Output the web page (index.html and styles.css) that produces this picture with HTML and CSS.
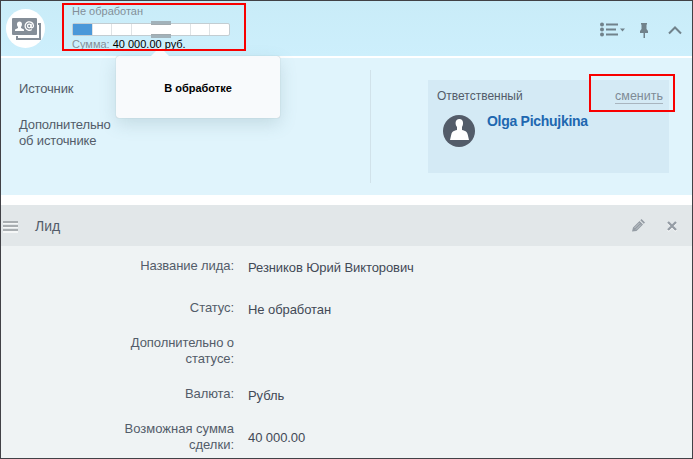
FILE: index.html
```html
<!DOCTYPE html>
<html lang="ru">
<head>
<meta charset="utf-8">
<title>Лид</title>
<link rel="stylesheet" href="styles.css">
</head>
<body>
<div class="app">
  <header class="top">
    <svg class="logo" width="40" height="40" viewBox="0 0 40 40">
      <circle cx="19.500" cy="20.500" r="19.500" fill="#fff"/>
      <path d="M11 16H34V31H11Z" fill="#fff" stroke="#858e98" stroke-width="2"/>
      <rect x="5" y="9" width="27" height="19" rx="1.500" fill="#fff"/>
      <rect x="6" y="10" width="25" height="17" rx="1" fill="#858e98"/>
      <path d="M13.500 13.500c3 0 3 4 1.500 5.500v1l3 1.500v1.500H9v-1.500l3-1.500v-1C10.500 17.500 10.500 13.500 13.500 13.500Z" fill="#fff"/>
      <g fill="none" stroke="#fff" stroke-width="1.300"><circle cx="23.300" cy="18" r="1.800"/><path d="M25.100 16v2.700c0 2 2.400 1 2.400-1a4.200 4.200 0 1 0-1.800 3.800"/></g>
    </svg>
    <div class="progress">
      <div class="state">Не обработан</div>
      <div class="bar"><i class="on"></i><i></i><i></i><i></i><i class="hover"></i><i></i><i></i><i></i></div>
      <div class="sum">Сумма: <b>40 000.00 руб.</b></div>
    </div>
    <div class="tools">
      <svg width="26" height="16" viewBox="0 0 26 16" fill="#71828b"><circle cx="2" cy="2.500" r="2"/><circle cx="2" cy="7.500" r="2"/><circle cx="2" cy="12.500" r="2"/><path d="M6 1.500h12v2H6zM6 6.500h10v2H6zM6 11.500h12v2H6zM20 6.500h5l-2.500 3z"/></svg>
      <svg width="9" height="17" viewBox="0 0 9 17" fill="#71828b"><path d="M1 1h6v1.500H6.500V7l1.500 2v2H5v5H3.500v-5H0V9l1.500-2V2.500H1z"/></svg>
      <svg width="14" height="9" viewBox="0 0 14 9" fill="none" stroke="#71828b" stroke-width="2"><path d="M1 7.500 7 1.500l6 6"/></svg>
    </div>
  </header>

  <section class="summary">
    <div class="source">
      <div class="field">Источник</div>
      <div class="field second">Дополнительно<br>об источнике</div>
    </div>
    <div class="card">
      <div class="card-head"><span class="role">Ответственный</span><a class="change">сменить</a></div>
      <div class="person">
        <svg width="32" height="32" viewBox="0 0 32 32"><circle cx="16" cy="16" r="16" fill="#535c69"/><path d="M16.500 4c4.500 0 4 6 2.500 8v3c3.500 1 5 1.500 5.700 4.500L26 25H7l1.300-5.500C9 16.500 10.500 16 14 15v-3c-2-2-2.500-8 2.500-8Z" fill="#fff"/></svg>
        <a class="name">Olga Pichujkina</a>
      </div>
    </div>
  </section>

  <div class="section-head">
    <svg class="grip" width="15" height="12" viewBox="0 0 15 12"><path fill="#a9aeb1" d="M0 0h15v2H0zM0 4h15v2H0zM0 8h15v2H0z"/><path fill="#f5f7f7" d="M0 2h15v1H0zM0 6h15v1H0zM0 10h15v2H0z"/></svg>
    <h2>Лид</h2>
    <svg class="edit" width="13" height="13" viewBox="0 0 13 13"><path fill="#949ca4" d="M0 12.500 1 8.500 7.500 2l3.500 3.500L4.500 12zM8.300 1.200 9.500 0 13 3.500l-1.200 1.200z"/><path stroke="#cbd0d4" stroke-width=".8" d="m2.500 9 5-5M4 10.500l5-5"/></svg>
    <svg class="close" width="10" height="11" viewBox="0 0 10 11"><path stroke="#fff" stroke-width="2" d="m1 2 8 8M9 2l-8 8"/><path stroke="#949ca4" stroke-width="2.300" d="m1 1 8 8M9 1 1 9"/></svg>
  </div>

  <dl class="form">
    <dt>Название лида:</dt><dd>Резников Юрий Викторович</dd>
    <dt>Статус:</dt><dd>Не обработан</dd>
    <dt>Дополнительно о<br>статусе:</dt><dd></dd>
    <dt>Валюта:</dt><dd>Рубль</dd>
    <dt class="wide">Возможная сумма<br>сделки:</dt><dd>40 000.00</dd>
  </dl>

  <div class="tip">В обработке</div>
  <div class="mark mark-progress"></div>
  <div class="mark mark-change"></div>
</div>
</body>
</html>
```
FILE: styles.css
```css
* { box-sizing: border-box; }
body { margin: 0; }
.app {
  position: relative;
  width: 693px;
  height: 459px;
  overflow: hidden;
  border: 1px solid #414146;
  background: #fff;
  color: #535c69;
  font: 13px/16px "Liberation Sans", Arial, sans-serif;
}
svg { display: block; flex: none; }

.top {
  display: flex;
  height: 55px;
  padding-left: 5px;
  background: linear-gradient(#c9ecf8, #cdeffc);
}
.logo { margin-top: 7px; }
.progress {
  width: 180px;
  margin-left: 26px;
  padding-top: 4px;
  font-size: 11px;
  line-height: 13px;
  color: #838f98;
}
.bar {
  display: flex;
  width: 158px;
  height: 13px;
  margin: 5px 0 2px;
  border: 1px solid #c3cdd2;
  border-radius: 2px;
  background: #fff;
}
.bar i { flex: 1; border-right: 1px solid #dfe3e5; }
.bar i:last-child { border-right: 0; }
.bar .on { background: #4a98d9; }
.bar .hover {
  flex: 0 0 20px;
  margin: -3px 0 -3px -1px;
  border: solid #a2b2ba;
  border-width: 3px 0;
  background: #fff;
  box-shadow: inset 0 1px #a2aaae, inset 0 -1px #a2aaae;
}
.sum b { color: #000; font-weight: 400; }
.tools {
  display: flex;
  align-items: center;
  gap: 14px;
  margin: 3px 10px 0 auto;
}
.tools svg:last-child { margin-left: 5px; }

.summary {
  display: flex;
  height: 137px;
  margin-top: 2px;
  background: #e0f4fc;
}
.source {
  width: 370px;
  height: 113px;
  margin-top: 12px;
  padding: 11px 0 0 18px;
  border-right: 1px solid #d1e2ea;
}
.field { letter-spacing: -.15px; }
.field.second { margin-top: 20px; }
.card {
  width: 241px;
  height: 93px;
  margin: 22px 0 0 57px;
  padding: 8px 6px 0 9px;
  background: #d4eaf5;
}
.card-head { display: flex; justify-content: space-between; }
.role { font-size: 12px; }
.change {
  height: 16px;
  border-bottom: 1px solid #a8b5bf;
  color: #7f8b96;
  font-size: 12.500px;
}
.person { display: flex; gap: 12px; margin: 11px 0 0 6px; }
.name {
  margin-top: -2px;
  color: #2067b0;
  font-size: 14px;
  font-weight: 700;
  letter-spacing: -.28px;
}

.section-head {
  display: flex;
  align-items: center;
  height: 41px;
  margin-top: 10px;
  background: #e2e7e9;
}
.grip { margin: 3px 0 0 2px; }
h2 { margin: 0 0 0 17px; font-size: 14px; font-weight: 400; }
.edit { margin-left: auto; }
.close { margin: 1px 15px 0 22px; }

.form {
  display: grid;
  grid-template-columns: 233px 1fr;
  grid-template-rows: 42px 35px 51px 35px 49px;
  column-gap: 14px;
  height: 212px;
  margin: 0;
  padding-top: 12px;
  background: #eff3f4;
  letter-spacing: -.08px;
}
dt { text-align: right; }
dt.wide { letter-spacing: 0; }
dd { margin: 2px 0 0; color: #424956; }
dd:last-child { margin-top: 9px; }

.tip {
  position: absolute;
  top: 55px;
  left: 115px;
  display: flex;
  align-items: center;
  justify-content: center;
  width: 164px;
  height: 62px;
  padding-top: 2px;
  border-radius: 3px;
  background: #f8fafc;
  box-shadow: 0 0 1px #9aa9ad, 0 6px 17px rgba(80, 120, 130, .2);
  color: #000;
  font-size: 11px;
  font-weight: 700;
}
.tip::before {
  content: "";
  position: absolute;
  top: -9px;
  left: 34px;
  border: 10px solid transparent;
  border-top: 0;
  border-bottom-color: #f8fafc;
}
.mark { position: absolute; border: 2px solid #f80000; }
.mark-progress { left: 61px; top: 2px; width: 184px; height: 48px; }
.mark-change { left: 588px; top: 73px; width: 86px; height: 38px; }
```
